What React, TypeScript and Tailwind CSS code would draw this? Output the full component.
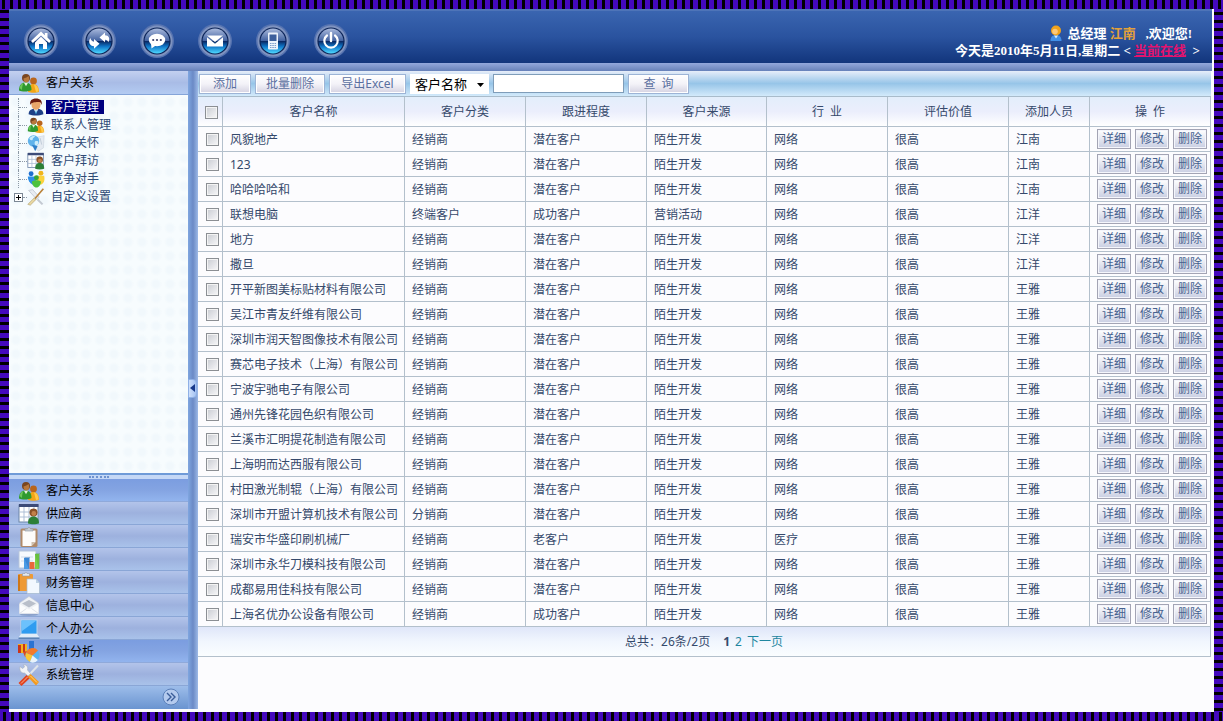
import React, { useState } from "react";

type IconProps = { className?: string };

function ContactsIcon({ className }: IconProps) {
  return (
    <svg viewBox="0 0 22 22" className={className} aria-hidden="true">
      <circle cx="15.5" cy="9" r="3.4" fill="#b9651c" />
      <path d="M10 20c0-6 2-8 5.500-8s5.500 3 5.500 8c-3 1-8 1-11 0z" fill="#f2a516" />
      <path d="M16 12.500c3 .5 4.500 3 4.500 7l-2.500.500z" fill="#ffc94a" />
      <circle cx="8" cy="6" r="4" fill="#7a4620" />
      <path d="M5.500 6.500c2-.5 4-1.500 5-2.500 1 2 1 5-1 6.500s-4-1-4-4z" fill="#b9783c" />
      <path d="M1 18.500c0-5 2-8 6.500-8s6 3 6 7.500c-3 1.800-9 2-12.500.500z" fill="#2f9a2f" />
      <path d="M6 10.800l2 3.500 2-3.500z" fill="#e9f5e0" />
      <path d="M1.500 16c1-3 2-4.500 4-5-1 2-1.500 4-1.500 7z" fill="#6cc65a" />
    </svg>
  );
}

function UserIcon({ className }: IconProps) {
  return (
    <svg viewBox="0 0 22 22" className={className} aria-hidden="true">
      <path d="M2 20c0-5 3-7 9-7s9 2 9 7c-5 2-13 2-18 0z" fill="#1d3f86" />
      <path d="M8 13l3 6 3-6z" fill="#e8f1fb" />
      <path d="M11 14l-1 5h2z" fill="#27a3d8" />
      <ellipse cx="11" cy="8" rx="5.600" ry="6.500" fill="#e9a66a" />
      <path d="M4 8.500C3 3 6 .5 11 .5s8 2.500 7 8c-1-3-2-3.500-4-3.500S5 5 4 8.500z" fill="#6b1c10" />
    </svg>
  );
}

function CareIcon({ className }: IconProps) {
  return (
    <svg viewBox="0 0 22 22" className={className} aria-hidden="true">
      <path d="M12 4l9-2-1 15-6 4-5-5z" fill="#e5ebf2" stroke="#c2ccd8" strokeWidth=".6" />
      <circle cx="8" cy="8.500" r="7" fill="#5fb2ea" />
      <path d="M3 5c2-2.500 5-3 7-2.500-1 2-3 2-3 4S3 8 3 5zM10 9c2-1 4 0 4 1s-1 4-3 4-2-4-1-5z" fill="#c9ecfb" />
      <path d="M6 13l4 8 3-6z" fill="#2f7fc8" />
      <path d="M16 5l2 8" stroke="#b9c6d4" />
    </svg>
  );
}

function VisitIcon({ className }: IconProps) {
  return (
    <svg viewBox="0 0 22 22" className={className} aria-hidden="true">
      <rect x="1" y="2" width="19" height="17" fill="#fff" stroke="#6d86a8" />
      <rect x="1" y="1" width="19.500" height="3" fill="#3c4b78" />
      <path d="M6 4v15M11 4v15M16 4v15M1 9h19M1 14h19" stroke="#a8bad2" strokeWidth=".9" />
      <circle cx="15.500" cy="9.500" r="4" fill="#8a5126" />
      <circle cx="15.800" cy="10.500" r="2.400" fill="#c2814a" />
      <path d="M10 20.500c0-5 2-7 5.500-7s5.500 2 5.500 7c-3 1-8 1-11 0z" fill="#2c7f36" />
    </svg>
  );
}

function RivalIcon({ className }: IconProps) {
  return (
    <svg viewBox="0 0 22 22" className={className} aria-hidden="true">
      <circle cx="5" cy="4.500" r="3" fill="#1e6fd0" />
      <path d="M1 8h9l2 8-5 2c-4-2-6-6-6-10z" fill="#2f8fe6" />
      <circle cx="17" cy="4" r="3" fill="#f0b51c" />
      <path d="M12 7h9c1 5 0 9-4 11l-5-2z" fill="#fbd23c" />
      <circle cx="11.500" cy="9.500" r="3" fill="#3aa834" />
      <path d="M6 14c3-2 8-2 11 0 0 4-2.500 7-5.500 7.500-3-.5-5.500-3.500-5.500-7.500z" fill="#4cc23e" />
    </svg>
  );
}

function WandIcon({ className }: IconProps) {
  return (
    <svg viewBox="0 0 22 22" className={className} aria-hidden="true">
      <path d="M2 3l5-1 8 9-3 3z" fill="#e8ecf1" stroke="#aab4c0" strokeWidth=".7" />
      <path d="M20 1L8 15" stroke="#b9823a" strokeWidth="2" />
      <path d="M9 12l2 2-7 7-3-1z" fill="#ead9a4" stroke="#a08d58" strokeWidth=".6" />
      <path d="M13 14l6 6" stroke="#c3c9d2" strokeWidth="2.500" />
    </svg>
  );
}

function ClipboardIcon({ className }: IconProps) {
  return (
    <svg viewBox="0 0 22 22" className={className} aria-hidden="true">
      <rect x="2.500" y="2.500" width="17" height="18.500" rx="1.500" fill="#b08a68" />
      <path d="M4.500 4.500h13V16l-4 4h-9z" fill="#fdfcfa" />
      <path d="M17.500 16l-4 4v-4z" fill="#cdbfae" />
      <path d="M7 5V3h2.500c0-2 3-2 3 0H15v2z" fill="#c7ccd3" stroke="#8d949d" strokeWidth=".6" />
    </svg>
  );
}

function SalesIcon({ className }: IconProps) {
  return (
    <svg viewBox="0 0 22 22" className={className} aria-hidden="true">
      <path d="M1 2h17v17H1z" fill="#f7fafe" stroke="#b6c5da" />
      <path d="M3 8h12M3 12h12" stroke="#d1dcea" />
      <rect x="6" y="9" width="5" height="11" fill="#4b9be6" />
      <path d="M6 9l1-1h5v11l-1 1z" fill="#2a6fbe" opacity=".45" />
      <rect x="11.500" y="13" width="5" height="7" fill="#e8673a" />
      <rect x="17" y="5" width="4" height="15" fill="#7bd04a" />
      <path d="M17 5l1-1h4v15l-1 1z" fill="#3e9d2a" opacity=".3" />
    </svg>
  );
}

function FinanceIcon({ className }: IconProps) {
  return (
    <svg viewBox="0 0 22 22" className={className} aria-hidden="true">
      <rect x="0" y="2" width="15" height="17" rx="1" fill="#ee9a35" />
      <path d="M0 3h2v16H0z" fill="#cf7717" />
      <path d="M4.500 4V1.500h2.500c0-1.500 2-1.500 2 0h2.500V4z" fill="#e4e8ee" stroke="#9099a6" strokeWidth=".6" />
      <path d="M9 7h9l3.500 4v10.500H9z" fill="#f2f8fe" stroke="#a9bccf" strokeWidth=".7" />
      <path d="M18 7v4h3.500z" fill="#bcd1e4" />
    </svg>
  );
}

function MailIcon({ className }: IconProps) {
  return (
    <svg viewBox="0 0 22 22" className={className} aria-hidden="true">
      <ellipse cx="11" cy="19.500" rx="9" ry="1.500" fill="#6e83ab" opacity=".5" />
      <path d="M1.500 8L11 1.500 20.500 8v10.500h-19z" fill="#eef1f5" stroke="#c3cad4" strokeWidth=".6" />
      <path d="M4 8.500l7-3.500 7 3.500-7 4z" fill="#b9bfca" />
      <path d="M1.500 9l9.500 5.500L20.500 9v9.500h-19z" fill="#fbfcfd" />
      <path d="M1.500 18.500l7-5M20.500 18.500l-7-5" stroke="#d5dae2" strokeWidth=".8" />
    </svg>
  );
}

function LaptopIcon({ className }: IconProps) {
  return (
    <svg viewBox="0 0 22 22" className={className} aria-hidden="true">
      <rect x="3" y="2" width="16" height="14" fill="#2f9cf0" stroke="#bcd6f0" />
      <path d="M3.500 2.500h15L4 13z" fill="#7ccaff" opacity=".8" />
      <path d="M3 16h16l2.500 3.500H.5z" fill="#e1edf8" />
      <path d="M.5 19.500h21V21H.5z" fill="#5b83b4" />
    </svg>
  );
}

function StatsIcon({ className }: IconProps) {
  return (
    <svg viewBox="0 0 22 22" className={className} aria-hidden="true">
      <path d="M0 3h9v9H0z" fill="#f3b21f" />
      <path d="M0 4h3v8H0zM5 3h2v8H5z" fill="#c9351b" />
      <path d="M11 0h5v9h-5z" fill="#2b73d3" />
      <path d="M5 11l8-2 1 5-7 2z" fill="#db4a20" />
      <circle cx="14.500" cy="14.500" r="7" fill="#58b1f1" />
      <path d="M14.500 14.500L8 12a7 7 0 0 1 12-2.500z" fill="#f47b2b" />
      <path d="M14.500 14.500L8 12a7 7 0 0 0 4 9z" fill="#fbc531" />
      <path d="M14.500 14.500L12 21a7 7 0 0 0 8-2z" fill="#e9f3fb" />
    </svg>
  );
}

function ToolsIcon({ className }: IconProps) {
  return (
    <svg viewBox="0 0 22 22" className={className} aria-hidden="true">
      <path d="M20 1.500L10 12" stroke="#dfe4ea" strokeWidth="2" />
      <path d="M3.500 22L.5 19l8.500-8.500 3.500 3z" fill="#e0431f" />
      <path d="M3 19.500l7-7" stroke="#ffb08a" strokeWidth="1" />
      <path d="M2 2.500l2.500 2L6.500 3 5.500.8C8.500.5 10.500 3 9.500 6l3 3.500-2.500 2.500-3.500-3C3.500 9.500 1 6.500 2 2.500z" fill="#f2f4f7" stroke="#a3adba" strokeWidth=".6" />
      <path d="M12.500 10l8.500 8-3 3.500-8-8.500z" fill="#f39a1e" />
      <path d="M12.500 12l6.500 6.500" stroke="#ffd583" />
    </svg>
  );
}

const toolIcons: { label: string; glyph: React.ReactNode }[] = [
  {
    label: "首页",
    glyph: (
      <>
        <path d="M17 7.500L7 17l1.900 2L17 11.500l8.100 7.500 1.900-2-3.500-3.400V9h-2.700v2.200z" fill="#fff" />
        <path d="M17 12.800l6 5.700V25h-4v-5h-4v5h-4v-6.500z" fill="#fff" />
      </>
    ),
  },
  {
    label: "刷新",
    glyph: (
      <>
        <path d="M17.500 13.500l5.500-5v2.700c3.800 0 5.600 3.600 3.200 7-.6-1.900-1.700-2.600-3.200-2.500v2.600z" fill="#fff" />
        <path d="M17.500 19.800l-5.500 5v-2.500c-4.300-.3-6.300-4.500-3.600-8.300.4 2.300 1.800 3.400 3.600 3.400V15z" fill="#fff" />
      </>
    ),
  },
  {
    label: "消息",
    glyph: (
      <>
        <ellipse cx="17" cy="16" rx="8.200" ry="6.200" fill="#fff" />
        <path d="M11 19l.500 5.500 5-3.500z" fill="#fff" />
        <g fill="#3a3f6a">
          <circle cx="13.200" cy="16" r="1.100" />
          <circle cx="17" cy="16" r="1.100" />
          <circle cx="20.800" cy="16" r="1.100" />
        </g>
      </>
    ),
  },
  {
    label: "邮件",
    glyph: (
      <>
        <path d="M9 11.500h16L17 18z" fill="#fff" />
        <path d="M9 13.200l8 6.500 8-6.500v9.300H9z" fill="#fff" />
      </>
    ),
  },
  {
    label: "手机",
    glyph: (
      <>
        <rect x="12" y="8.500" width="10" height="17" rx="1" fill="#eef3fb" />
        <rect x="13.500" y="10.500" width="7" height="6.500" fill="#3d5f9c" />
        <path d="M14 19.500h6M14 21.500h6M14 23.500h6" stroke="#6f93c4" strokeWidth=".9" strokeDasharray="1.500 .8" />
      </>
    ),
  },
  {
    label: "退出",
    glyph: (
      <>
        <path d="M13 11.500a6.700 6.700 0 1 0 8 0" fill="none" stroke="#fff" strokeWidth="2.200" strokeLinecap="round" />
        <path d="M17 9v8" stroke="#fff" strokeWidth="2.400" strokeLinecap="round" />
      </>
    ),
  },
];

function ToolButton({ label, children }: { label: string; children: React.ReactNode }) {
  return (
    <button type="button" aria-label={label} className="size-[34px] rounded-full">
      <svg viewBox="0 0 34 34" className="size-full" aria-hidden="true">
        <defs>
          <linearGradient id="orbTop" x1="0" y1="0" x2="0" y2="1">
            <stop offset="0" stopColor="#a9b9dc" />
            <stop offset=".5" stopColor="#40609f" />
            <stop offset=".52" stopColor="#0a2a66" />
            <stop offset=".72" stopColor="#0f76c8" />
            <stop offset="1" stopColor="#4fd8ff" />
          </linearGradient>
        </defs>
        <circle cx="17" cy="17" r="17" fill="#5673b0" />
        <circle cx="17" cy="17" r="15.500" fill="#7f93bf" />
        <circle cx="17" cy="17" r="13.600" fill="#0c2458" />
        <circle cx="17" cy="17" r="12.400" fill="url(#orbTop)" />
        {children}
      </svg>
    </button>
  );
}

const treeItems = [
  { label: "客户管理", Icon: UserIcon, selected: true },
  { label: "联系人管理", Icon: ContactsIcon },
  { label: "客户关怀", Icon: CareIcon },
  { label: "客户拜访", Icon: VisitIcon },
  { label: "竞争对手", Icon: RivalIcon },
];

const navItems = [
  { label: "客户关系", Icon: ContactsIcon, active: true },
  { label: "供应商", Icon: VisitIcon },
  { label: "库存管理", Icon: ClipboardIcon },
  { label: "销售管理", Icon: SalesIcon },
  { label: "财务管理", Icon: FinanceIcon },
  { label: "信息中心", Icon: MailIcon },
  { label: "个人办公", Icon: LaptopIcon },
  { label: "统计分析", Icon: StatsIcon, active: true },
  { label: "系统管理", Icon: ToolsIcon },
];

const columns = [
  { title: "客户名称", width: "w-[182px]" },
  { title: "客户分类", width: "w-[121px]" },
  { title: "跟进程度", width: "w-[121px]" },
  { title: "客户来源", width: "w-[120px]" },
  { title: "行  业", width: "w-[121px]" },
  { title: "评估价值", width: "w-[121px]" },
  { title: "添加人员", width: "w-[81px]" },
  { title: "操  作", width: "w-[121px]" },
];

const rows: string[][] = [
  ["风貌地产", "经销商", "潜在客户", "陌生开发", "网络", "很高", "江南"],
  ["123", "经销商", "潜在客户", "陌生开发", "网络", "很高", "江南"],
  ["哈哈哈哈和", "经销商", "潜在客户", "陌生开发", "网络", "很高", "江南"],
  ["联想电脑", "终端客户", "成功客户", "营销活动", "网络", "很高", "江洋"],
  ["地方", "经销商", "潜在客户", "陌生开发", "网络", "很高", "江洋"],
  ["撒旦", "经销商", "潜在客户", "陌生开发", "网络", "很高", "江洋"],
  ["开平新图美标贴材料有限公司", "经销商", "潜在客户", "陌生开发", "网络", "很高", "王雅"],
  ["吴江市青友纤维有限公司", "经销商", "潜在客户", "陌生开发", "网络", "很高", "王雅"],
  ["深圳市润天智图像技术有限公司", "经销商", "潜在客户", "陌生开发", "网络", "很高", "王雅"],
  ["赛芯电子技术（上海）有限公司", "经销商", "潜在客户", "陌生开发", "网络", "很高", "王雅"],
  ["宁波宇驰电子有限公司", "经销商", "潜在客户", "陌生开发", "网络", "很高", "王雅"],
  ["通州先锋花园色织有限公司", "经销商", "潜在客户", "陌生开发", "网络", "很高", "王雅"],
  ["兰溪市汇明提花制造有限公司", "经销商", "潜在客户", "陌生开发", "网络", "很高", "王雅"],
  ["上海明而达西服有限公司", "经销商", "潜在客户", "陌生开发", "网络", "很高", "王雅"],
  ["村田激光制辊（上海）有限公司", "经销商", "潜在客户", "陌生开发", "网络", "很高", "王雅"],
  ["深圳市开盟计算机技术有限公司", "分销商", "潜在客户", "陌生开发", "网络", "很高", "王雅"],
  ["瑞安市华盛印刷机械厂", "经销商", "老客户", "陌生开发", "医疗", "很高", "王雅"],
  ["深圳市永华刀模科技有限公司", "经销商", "潜在客户", "陌生开发", "网络", "很高", "王雅"],
  ["成都易用佳科技有限公司", "经销商", "潜在客户", "陌生开发", "网络", "很高", "王雅"],
  ["上海名优办公设备有限公司", "经销商", "成功客户", "陌生开发", "网络", "很高", "王雅"],
];

function Check({ label }: { label: string }) {
  return (
    <input
      type="checkbox"
      aria-label={label}
      className="mx-auto block size-[13px] appearance-none border border-[#8b8f94] bg-linear-to-br from-[#c9ccd2] to-[#f8f8fa] shadow-[inset_0_0_0_1px_#f4f4f4] checked:from-[#4a6fb5] checked:to-[#4a6fb5]"
    />
  );
}

function ToolbarButton({ children, width }: { children: React.ReactNode; width: string }) {
  return (
    <button
      type="button"
      className={`${width} h-5 border border-[#9db4d6] bg-linear-to-b from-white via-[#f3f2f8] to-[#d5d3e2] text-center leading-[18px] whitespace-pre text-[#5a6f9f] shadow-[inset_0_0_0_1px_#ffffff]`}
    >
      {children}
    </button>
  );
}

function Header() {
  return (
    <header className="flex items-start justify-between border-t-2 border-[#4e74b8] bg-linear-to-b from-[#3a65b0] via-[#2a539f] to-[#12357c] pr-3">
      <nav className="flex gap-6 pt-[13px] pb-[5px] pl-[15px]">
        {toolIcons.map((t) => (
          <ToolButton key={t.label} label={t.label}>
            {t.glyph}
          </ToolButton>
        ))}
      </nav>
      <div className="pt-[14px] text-right font-['Liberation_Serif','Noto_Sans_CJK_SC',serif] text-[13px] leading-[17px] font-bold text-white">
        <p className="flex items-center justify-end gap-1 pr-2">
          <svg viewBox="0 0 14 17" className="h-[17px] w-[14px]" aria-hidden="true">
            <path d="M1.500 16c0-4 2-6 5.500-6s5.500 2 5.500 6z" fill="#3f8fe8" />
            <path d="M5 10.500l2 3 2-3z" fill="#d5ebff" />
            <circle cx="7" cy="5.500" r="5" fill="#f0a21c" />
            <circle cx="6" cy="6.500" r="2.800" fill="#fbc87a" />
          </svg>
          <span>
            总经理 <span className="text-[#e3a13a]">江南</span>&nbsp; &nbsp;,欢迎您!
          </span>
        </p>
        <p>
          今天是2010年5月11日,星期二 &lt;{" "}
          <a href="#online" className="text-[#e5126e] underline">
            当前在线
          </a>{" "}
          &nbsp;&gt;
        </p>
      </div>
    </header>
  );
}

function Sidebar() {
  return (
    <aside className="flex w-[179px] shrink-0 flex-col text-black">
      <div className="flex h-6 items-center gap-[6px] border-b border-[#84a4d8] bg-linear-to-b from-[#c3d0f0] via-[#a9bce6] to-[#b3cbf2] pt-px pl-[9px]">
        <ContactsIcon className="size-[22px]" />
        <h2>客户关系</h2>
      </div>
      <div className="grow bg-[#f7fcfe] bg-[radial-gradient(circle,#f1f8fc_30%,transparent_60%)] bg-size-[14px_14px] pt-[3px] text-[#2f4a75]">
        <ul>
          {treeItems.map(({ label, Icon, selected }) => (
            <li key={label} className="flex h-[18px] items-center pl-[9px]">
              <span className="flex h-full w-[9px] items-center border-l border-dotted border-[#8d99a6]">
                <span className="w-full border-t border-dotted border-[#8d99a6]" />
              </span>
              <Icon className="size-[18px] shrink-0" />
              <a
                href="#tree"
                className={
                  selected
                    ? "ml-[1px] bg-[#000080] px-[5px] leading-[14px] text-white"
                    : "ml-[1px] px-[5px] leading-[14px]"
                }
              >
                {label}
              </a>
            </li>
          ))}
          <li className="flex h-[18px] items-center pl-[5px]">
            <button
              type="button"
              aria-label="展开"
              className="flex size-[9px] items-center justify-center border border-[#7b8794] bg-white"
            >
              <svg viewBox="0 0 5 5" className="size-[5px]" aria-hidden="true">
                <path d="M0 2.500h5M2.500 0v5" stroke="#000" />
              </svg>
            </button>
            <span className="w-[4px] border-t border-dotted border-[#8d99a6]" />
            <WandIcon className="size-[18px] shrink-0" />
            <a href="#tree" className="ml-[1px] px-[5px] leading-[14px]">
              自定义设置
            </a>
          </li>
        </ul>
      </div>
      <div className="flex h-[6px] items-center justify-center border-t-2 border-[#6f9bd8] bg-[#c5d8f6]">
        <span className="w-5 border-t-2 border-dotted border-[#6f93cf]" />
      </div>
      <nav>
        {navItems.map(({ label, Icon, active }) => (
          <a
            key={label}
            href="#nav"
            className={
              active
                ? "flex h-[23px] items-center gap-[6px] border-b border-[#8fa9da] bg-linear-to-b from-[#7b9de0] via-[#84a4e2] to-[#92b4ee] pt-px pl-[9px]"
                : "flex h-[23px] items-center gap-[6px] border-b border-[#8aa6d6] bg-linear-to-b from-[#b3c4ea] via-[#9db1de] to-[#a9c2ea] pt-px pl-[9px]"
            }
          >
            <Icon className="size-[22px]" />
            <span>{label}</span>
          </a>
        ))}
      </nav>
      <div className="flex h-[23px] items-center justify-end bg-linear-to-b from-[#9dbdea] to-[#6a94d0] pr-2 pb-[2px]">
        <button type="button" aria-label="更多" className="size-[18px]">
          <svg viewBox="0 0 18 18" className="size-full" aria-hidden="true">
            <circle cx="9" cy="9" r="8" fill="#b4caee" stroke="#5b80ba" />
            <path d="M5 5l4 4-4 4M9 5l4 4-4 4" fill="none" stroke="#3a5c98" strokeWidth="1.400" />
          </svg>
        </button>
      </div>
    </aside>
  );
}

function Toolbar() {
  return (
    <form
      className="flex h-[25px] items-center gap-1 bg-linear-to-b from-[#e6edf9] via-[#97c5e8] to-[#d3eafb] pl-px"
      onSubmit={(e) => e.preventDefault()}
    >
      <ToolbarButton width="w-[52px]">添加</ToolbarButton>
      <ToolbarButton width="w-[70px]">批量删除</ToolbarButton>
      <ToolbarButton width="w-[77px]">导出Excel</ToolbarButton>
      <div className="relative">
        <select
          aria-label="查询字段"
          className="block h-5 w-[79px] appearance-none bg-white pl-[5px] text-[13px] leading-5 text-black"
        >
          <option>客户名称</option>
          <option>客户分类</option>
        </select>
        <svg viewBox="0 0 7 4" className="pointer-events-none absolute top-[9px] right-[5px] h-1 w-[7px]" aria-hidden="true">
          <path d="M0 0h7L3.500 4z" fill="#000" />
        </svg>
      </div>
      <input type="text" aria-label="关键字" className="h-[19px] w-[131px] border border-[#7f9db9] bg-white px-1 text-black" />
      <ToolbarButton width="w-[61px]">查  询</ToolbarButton>
    </form>
  );
}

function CustomerTable() {
  return (
    <table className="w-full table-fixed border-separate border-spacing-0 border-t border-[#a9bccb] text-[#35496b]">
      <thead>
        <tr className="h-[30px]">
          <th className="w-[25px] border-r border-b border-[#b3c0cc] bg-linear-to-b from-[#e3eefb] via-[#ebeefc] to-white pt-[2px] pl-[2px]">
            <Check label="全选" />
          </th>
          {columns.map((c) => (
            <th
              key={c.title}
              className={`${c.width} border-r border-b border-[#b3c0cc] bg-linear-to-b from-[#e3eefb] via-[#ebeefc] to-white font-normal whitespace-pre`}
            >
              {c.title}
            </th>
          ))}
        </tr>
      </thead>
      <tbody>
        {rows.map((row) => (
          <tr key={row[0]} className="h-[25px]">
            <td className="border-r border-b border-[#b3c0cc] pt-px pl-[4px]">
              <Check label={row[0]} />
            </td>
            {row.map((cell, i) => (
              <td key={i} className="border-r border-b border-[#b3c0cc] pt-[2px] pl-[7px] whitespace-nowrap">
                {cell}
              </td>
            ))}
            <td className="border-r border-b border-[#b3c0cc]">
              <div className="flex justify-end gap-1 pr-[3px]">
                {["详细", "修改", "删除"].map((a) => (
                  <button
                    key={a}
                    type="button"
                    className="h-5 w-[34px] border border-[#a3a4b4] bg-linear-to-b from-white to-[#c9cee2] leading-[18px] text-[#46618f] shadow-[inset_0_0_0_1px_#f4f5fb]"
                  >
                    {a}
                  </button>
                ))}
              </div>
            </td>
          </tr>
        ))}
      </tbody>
      <tfoot>
        <tr className="h-[30px]">
          <td
            colSpan={9}
            className="border-r border-b border-[#b3c0cc] bg-linear-to-b from-[#dfe6f9] via-[#f1f6fe] to-[#fafdff]"
          >
            <div className="flex justify-center gap-[5px]">
              <span className="pr-2">总共：26条/2页</span>
              <b>1</b>
              <a href="#page2" className="text-[#1f86a0]">
                2
              </a>
              <a href="#next" className="text-[#1f86a0]">
                下一页
              </a>
            </div>
          </td>
        </tr>
      </tfoot>
    </table>
  );
}

export default function App() {
  const [open, setOpen] = useState(true);
  return (
    <div className="flex min-h-screen flex-col bg-black font-['Noto_Sans','Noto_Sans_CJK_SC',sans-serif] text-[12px] leading-[16px]">
      <div className="h-[9px] bg-[repeating-linear-gradient(90deg,#4409bd_0,#4409bd_2px,#000_2px,#000_5px,#4409bd_5px,#4409bd_8px)]" />
      <div className="flex grow">
        <div className="w-[9px] shrink-0 bg-[repeating-linear-gradient(180deg,#4409bd_0,#4409bd_1px,#000_1px,#000_4px,#4409bd_4px,#4409bd_8px)]" />
        <div className="flex min-w-0 grow flex-col bg-[#fcfcfe] pr-[2px] pb-[3px]">
          <Header />
          <div className="h-2 bg-linear-to-b from-[#93a8dc] to-[#6781b9]" />
          <div className="flex grow">
            {open && <Sidebar />}
            <div className="flex w-[10px] shrink-0 items-center bg-linear-to-r from-[#7fa6e0] via-[#6b8ac6] to-[#9db9e6] pb-1">
              <button
                type="button"
                aria-label="收起侧栏"
                onClick={() => setOpen(!open)}
                className="flex h-[19px] w-[9px] items-center justify-center rounded-r-sm border border-[#8fb0e6] bg-linear-to-r from-[#cfe0fb] to-[#a4c2f2]"
              >
                <svg viewBox="0 0 5 8" className="h-2 w-[5px]" aria-hidden="true">
                  <path d="M5 0v8L0 4z" fill="#17388a" />
                </svg>
              </button>
            </div>
            <main className="min-w-0 grow pr-px">
              <Toolbar />
              <CustomerTable />
            </main>
          </div>
        </div>
        <div className="w-[9px] shrink-0 bg-[repeating-linear-gradient(180deg,#4409bd_0,#4409bd_3px,#000_3px,#000_6px,#4409bd_6px,#4409bd_8px)]" />
      </div>
      <div className="h-[9px] bg-[repeating-linear-gradient(90deg,#4409bd_0,#4409bd_3px,#000_3px,#000_6px,#4409bd_6px,#4409bd_8px)]" />
    </div>
  );
}
